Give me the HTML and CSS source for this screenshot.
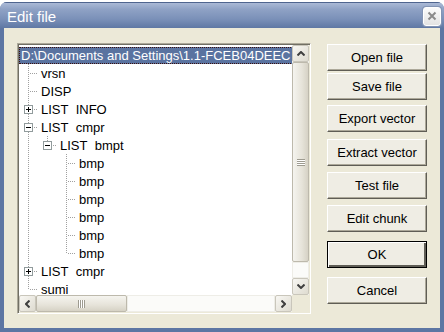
FILE: index.html
```html
<!DOCTYPE html>
<html lang="en">
<head>
    <meta charset="UTF-8">
    <title>Edit file</title>
    <link rel="stylesheet" href="styles.css">
</head>
<body>

<div class="window">
    <div class="titlebar">
        <span class="title">Edit file</span>
        <span class="close">
            <svg width="10" height="10" viewBox="0 0 10 10"><path d="M1.5 1.5 L8.5 8.5 M8.5 1.5 L1.5 8.5" stroke="#8a8a8a" stroke-width="2"/></svg>
        </span>
    </div>

    <div class="dialog">
        <div class="treebox">
            <div class="tree">
                <div class="row"><span class="label selected">D:\Documents and Settings\1.1-FCEB04DEEC</span></div>
                <div class="row"><span class="cell tee"><i class="hline"></i></span><span class="label">vrsn</span></div>
                <div class="row"><span class="cell tee"><i class="hline"></i></span><span class="label">DISP</span></div>
                <div class="row"><span class="cell tee"><i class="box plus"></i><i class="hline short"></i></span><span class="label">LIST&nbsp; INFO</span></div>
                <div class="row"><span class="cell tee"><i class="box"></i><i class="hline short"></i></span><span class="label">LIST&nbsp; cmpr</span></div>
                <div class="row"><span class="cell pipe"></span><span class="cell elbow"><i class="box"></i><i class="hline short"></i></span><span class="label">LIST&nbsp; bmpt</span></div>
                <div class="row"><span class="cell pipe"></span><span class="cell"></span><span class="cell tee"><i class="hline"></i></span><span class="label">bmp</span></div>
                <div class="row"><span class="cell pipe"></span><span class="cell"></span><span class="cell tee"><i class="hline"></i></span><span class="label">bmp</span></div>
                <div class="row"><span class="cell pipe"></span><span class="cell"></span><span class="cell tee"><i class="hline"></i></span><span class="label">bmp</span></div>
                <div class="row"><span class="cell pipe"></span><span class="cell"></span><span class="cell tee"><i class="hline"></i></span><span class="label">bmp</span></div>
                <div class="row"><span class="cell pipe"></span><span class="cell"></span><span class="cell tee"><i class="hline"></i></span><span class="label">bmp</span></div>
                <div class="row"><span class="cell pipe"></span><span class="cell"></span><span class="cell elbow"><i class="hline"></i></span><span class="label">bmp</span></div>
                <div class="row"><span class="cell tee"><i class="box plus"></i><i class="hline short"></i></span><span class="label">LIST&nbsp; cmpr</span></div>
                <div class="row"><span class="cell elbow"><i class="hline"></i></span><span class="label">sumi</span></div>
            </div>

            <!-- vertical scrollbar -->
            <div class="vscroll">
                <span class="sbtn"><svg width="8" height="5" viewBox="0 0 8 5"><path d="M0.5 4.5 L4 1 L7.5 4.5" fill="none" stroke="#3f3f3f" stroke-width="2"/></svg></span>
                <span class="vthumb"><i class="grip-h"></i></span>
                <span class="track"></span>
                <span class="sbtn"><svg width="8" height="5" viewBox="0 0 8 5"><path d="M0.5 0.5 L4 4 L7.5 0.5" fill="none" stroke="#3f3f3f" stroke-width="2"/></svg></span>
            </div>

            <!-- horizontal scrollbar -->
            <div class="hscroll">
                <span class="sbtn"><svg width="5" height="8" viewBox="0 0 5 8"><path d="M4.5 0.5 L1 4 L4.5 7.5" fill="none" stroke="#3f3f3f" stroke-width="2"/></svg></span>
                <span class="hthumb"><i class="grip-v"></i></span>
                <span class="track"></span>
                <span class="sbtn"><svg width="5" height="8" viewBox="0 0 5 8"><path d="M0.5 0.5 L4 4 L0.5 7.5" fill="none" stroke="#3f3f3f" stroke-width="2"/></svg></span>
            </div>
            <div class="corner"></div>
        </div>

        <div class="buttons">
            <button class="btn">Open file</button>
            <button class="btn">Save file</button>
            <button class="btn">Export vector</button>
            <button class="btn">Extract vector</button>
            <button class="btn">Test file</button>
            <button class="btn">Edit chunk</button>
            <button class="btn default">OK</button>
            <button class="btn">Cancel</button>
        </div>
    </div>
</div>

</body>
</html>
```
FILE: styles.css
```css
body {
    margin: 0;
    background: #fff;
    font-family: "Liberation Sans", Arial, sans-serif;
    font-size: 13px;
}
.window {
    margin-top: 2px;
    width: 444px;
    height: 330px;
    box-sizing: border-box;
    border-radius: 7px 7px 0 0;
    background: #5d76a3;
    display: flex;
    flex-direction: column;
    overflow: hidden;
}
.titlebar {
    height: 26px;
    flex: none;
    display: flex;
    align-items: center;
    justify-content: space-between;
    padding: 0 3px 0 7px;
    background: linear-gradient(#aab9d6 0, #8fa2c5 25%, #7a90b8 65%, #5f78a4 100%);
    border-top: 1px solid #4f658f;
    box-sizing: border-box;
}
.title {
    color: #fff;
    font-size: 15px;
    padding-top: 1px;
}
.close {
    width: 18px;
    height: 19px;
    box-sizing: border-box;
    border: 1px solid #fff;
    border-radius: 3px;
    box-shadow: 0 0 0 1px #8394b4;
    background: linear-gradient(#fbfbfb, #e3e3e3);
    display: flex;
    align-items: center;
    justify-content: center;
    margin-top: 1px;
}
.dialog {
    flex: 1;
    margin: 0 4px 4px 4px;
    background: #ece9d8;
    display: flex;
    padding: 15px 0 0 13px;
}

/* tree view */
.treebox {
    width: 294px;
    height: 271px;
    box-sizing: border-box;
    border: 1px solid;
    border-color: #aca899 #fff #fff #aca899;
    box-shadow: inset 1px 1px #716f64;
    padding: 1px 0 0 1px;
    display: grid;
    grid-template-columns: 273px 17px;
    grid-template-rows: 250px 17px;
}
.tree {
    background: #fff;
    overflow: hidden;
    padding-top: 1px;
    color: #000;
}
.row {
    height: 18px;
    display: flex;
    align-items: center;
    white-space: nowrap;
}
.label {
    margin-left: 2px;
    line-height: 15px;
    padding: 0 1px;
}
.selected {
    margin-left: 0;
    padding: 1px 2px;
    background: #5a73a0;
    color: #fff;
    outline: 1px dotted #3a1010;
    outline-offset: -1px;
}
.cell {
    width: 19px;
    height: 18px;
    flex: none;
    display: flex;
    align-items: center;
    justify-content: flex-end;
}
.pipe, .tee {
    background: repeating-linear-gradient(#a0a0a0 0 1px, transparent 1px 2px) 9px 0 / 1px 100% no-repeat;
}
.elbow {
    background: repeating-linear-gradient(#a0a0a0 0 1px, transparent 1px 2px) 9px 0 / 1px 10px no-repeat;
}
.hline {
    width: 9px;
    height: 1px;
    background: repeating-linear-gradient(to right, transparent 0 1px, #a0a0a0 1px 2px);
}
.hline.short {
    width: 5px;
}
.box {
    width: 9px;
    height: 9px;
    box-sizing: border-box;
    border: 1px solid #919b9c;
    background: linear-gradient(#000, #000) center / 5px 1px no-repeat, #fff;
}
.box.plus {
    background: linear-gradient(#000, #000) center / 5px 1px no-repeat,
                linear-gradient(#000, #000) center / 1px 5px no-repeat, #fff;
}

/* scrollbars */
.vscroll {
    display: flex;
    flex-direction: column;
    background: #f7f6f2;
}
.hscroll {
    display: flex;
    background: #f7f6f2;
}
.corner {
    background: #ece9d8;
}
.sbtn {
    width: 17px;
    height: 17px;
    flex: none;
    box-sizing: border-box;
    border: 1px solid #c9c6bb;
    border-radius: 2px;
    background: linear-gradient(135deg, #f8f7f3, #dedbd0);
    display: flex;
    align-items: center;
    justify-content: center;
}
.track {
    flex: 1;
    background: #fbfbf9;
    box-shadow: inset 0 0 0 1px #eeede7;
}
.vthumb {
    height: 200px;
    flex: none;
    box-sizing: border-box;
    border: 1px solid #bdb9ac;
    border-radius: 2px;
    background: linear-gradient(to right, #f5f4ef, #e6e3d9 60%, #d6d2c5);
    display: flex;
    align-items: center;
    justify-content: center;
}
.hthumb {
    width: 91px;
    flex: none;
    box-sizing: border-box;
    border: 1px solid #bdb9ac;
    border-radius: 2px;
    background: linear-gradient(#f5f4ef, #e6e3d9 60%, #d6d2c5);
    display: flex;
    align-items: center;
    justify-content: center;
}
.grip-h {
    width: 8px;
    height: 7px;
    background: repeating-linear-gradient(#9e9b90 0 1px, #fff 1px 2px);
}
.grip-v {
    width: 7px;
    height: 8px;
    background: repeating-linear-gradient(to right, #9e9b90 0 1px, #fff 1px 2px);
}

/* buttons */
.buttons {
    margin-left: 16px;
    width: 100px;
    display: flex;
    flex-direction: column;
    padding-top: 1px;
}
.btn {
    height: 27px;
    font-family: "Liberation Sans", Arial, sans-serif;
    font-size: 13px;
    color: #000;
    background: #efede4;
    border: 1px solid;
    border-color: #fff #5f5d55 #5f5d55 #fff;
    box-shadow: inset -1px -1px #aca899;
    padding: 0;
}
.btn:nth-child(2) { margin-top: 2px; }
.btn:nth-child(3) { margin-top: 5px; }
.btn:nth-child(4) { margin-top: 7px; }
.btn:nth-child(5) { margin-top: 6px; }
.btn:nth-child(6) { margin-top: 6px; }
.btn:nth-child(7) { margin-top: 9px; }
.btn:nth-child(8) { margin-top: 9px; }
.btn.default {
    border-color: #000;
    box-shadow: inset 1px 1px #fff, inset -2px -2px #5f5d55;
}
```
